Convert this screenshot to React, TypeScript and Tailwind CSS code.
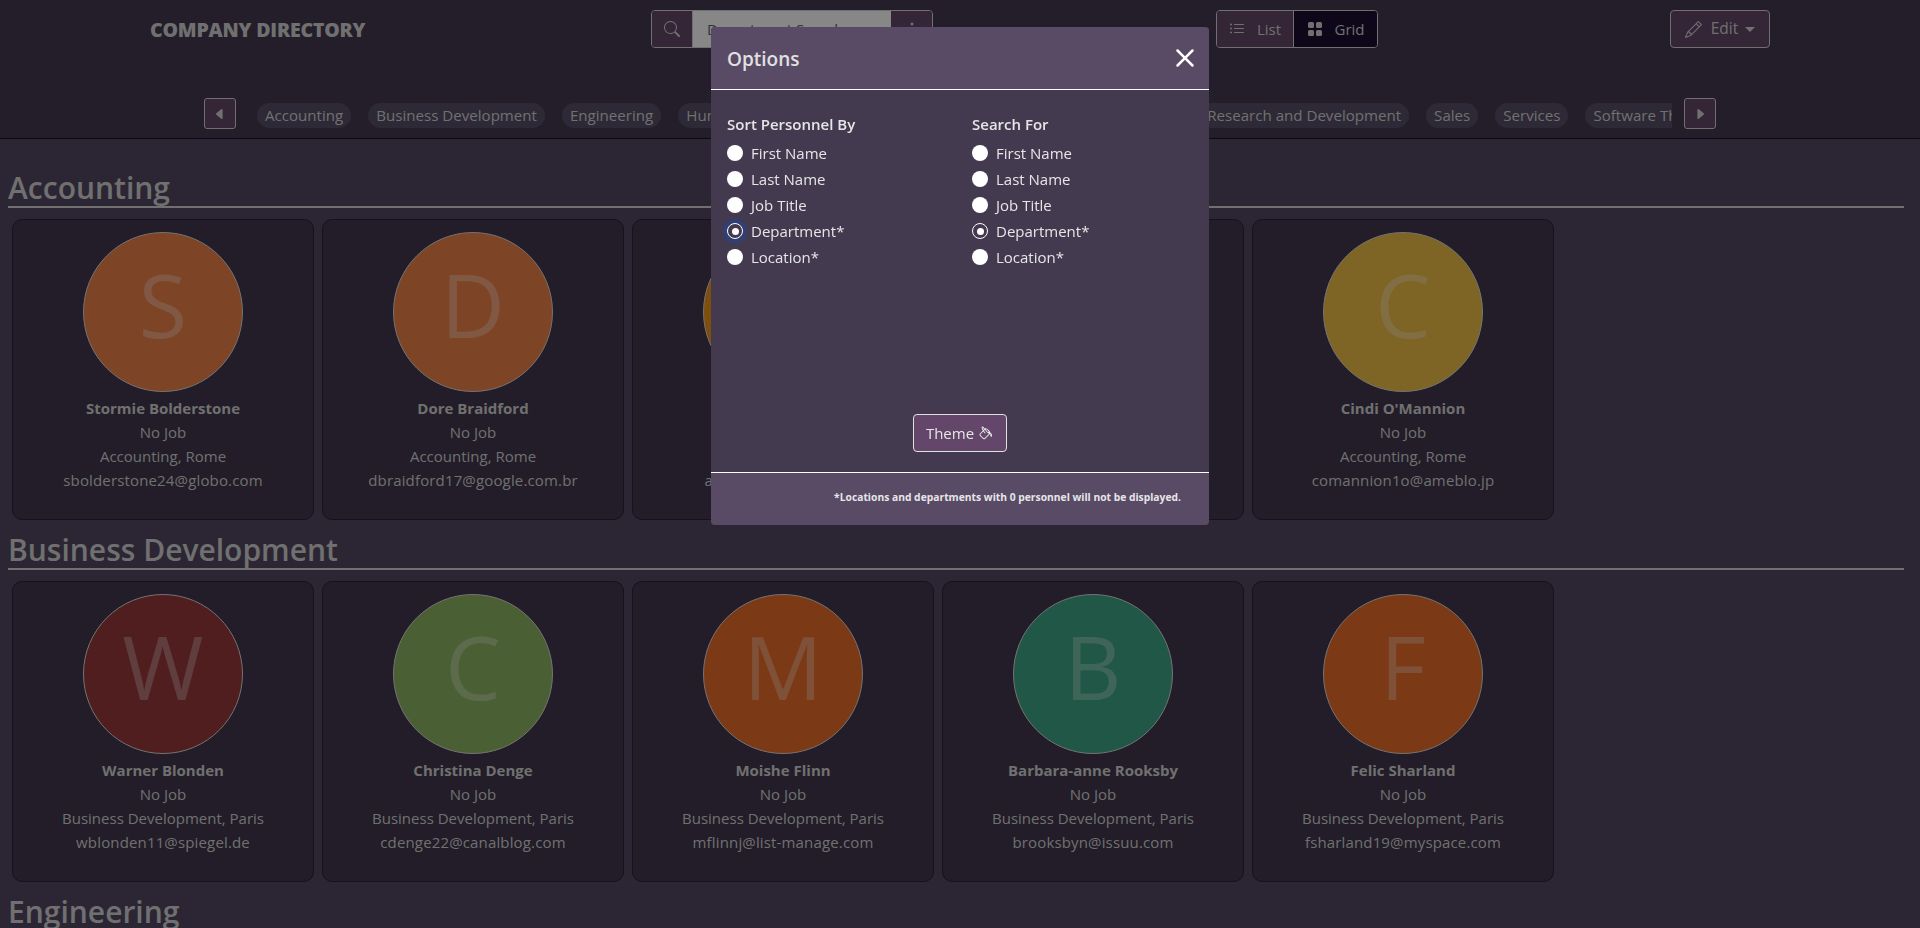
import React from 'react';
import { BsSearch, BsThreeDotsVertical, BsPencil, BsPaintBucket, BsX, BsListUl, BsGridFill, BsCaretLeftFill, BsCaretRightFill } from 'react-icons/bs';

type Person = { name: string; email: string; city: string; letter: string; color: string };

const departments = [
  'Accounting',
  'Business Development',
  'Engineering',
  'Human Resources',
  'Legal',
  'Marketing',
  'Product Management',
  'Research and Development',
  'Sales',
  'Services',
  'Software Then',
];

const sections: { title: string; people: Person[] }[] = [
  {
    title: 'Accounting',
    people: [
      { name: 'Stormie Bolderstone', email: 'sbolderstone24@globo.com', city: 'Rome', letter: 'S', color: 'bg-[#ec8048]' },
      { name: 'Dore Braidford', email: 'dbraidford17@google.com.br', city: 'Rome', letter: 'D', color: 'bg-[#ec8048]' },
      { name: 'Annis Lorkin', email: 'alorkin2a@senate.gov', city: 'Rome', letter: 'A', color: 'bg-[#ec951e]' },
      { name: 'Gerty Palfrey', email: 'gpalfrey1k@about.me', city: 'Rome', letter: 'G', color: 'bg-[#ec8048]' },
      { name: "Cindi O'Mannion", email: 'comannion1o@ameblo.jp', city: 'Rome', letter: 'C', color: 'bg-[#eebf48]' },
    ],
  },
  {
    title: 'Business Development',
    people: [
      { name: 'Warner Blonden', email: 'wblonden11@spiegel.de', city: 'Paris', letter: 'W', color: 'bg-[#97393a]' },
      { name: 'Christina Denge', email: 'cdenge22@canalblog.com', city: 'Paris', letter: 'C', color: 'bg-[#8eb364]' },
      { name: 'Moishe Flinn', email: 'mflinnj@list-manage.com', city: 'Paris', letter: 'M', color: 'bg-[#ea6d2b]' },
      { name: 'Barbara-anne Rooksby', email: 'brooksbyn@issuu.com', city: 'Paris', letter: 'B', color: 'bg-[#3ea484]' },
      { name: 'Felic Sharland', email: 'fsharland19@myspace.com', city: 'Paris', letter: 'F', color: 'bg-[#ea6d2b]' },
    ],
  },
];

const radioLabels = ['First Name', 'Last Name', 'Job Title', 'Department*', 'Location*'];

const Card: React.FC<{ person: Person; department: string }> = ({ person, department }) => (
  <div className="w-[302px] h-[301px] shrink-0 rounded-[10px] border border-[#2c2038] bg-[#40374d] flex flex-col items-center pt-[12px] text-[#d4d4d4] text-[15px] leading-[24px]">
    <div className={`w-[160px] h-[160px] pb-[16px] rounded-full border border-[#d9d9d9] flex items-center justify-center text-[88px] leading-none text-white/30 ${person.color}`}>
      {person.letter}
    </div>
    <div className="mt-[4px] font-bold">{person.name}</div>
    <div>No Job</div>
    <div>
      {department}, {person.city}
    </div>
    <div className="tracking-[0.01em]">{person.email}</div>
  </div>
);

const RadioGroup: React.FC<{ title: string; focused?: boolean }> = ({ title, focused }) => (
  <div className="w-[245px] shrink-0">
    <div className="font-semibold text-[15px] leading-[24px] text-[#e6e6e6] mb-[4px]">{title}</div>
    {radioLabels.map((label, i) => (
      <label key={label} className="flex items-center gap-[8px] h-[26px] text-[15px] text-[#e6e6e6]">
        {i === 3 ? (
          <span className={`w-[16px] h-[16px] rounded-full border border-white flex items-center justify-center ${focused ? 'ring-[4px] ring-[#2f3f78]' : ''}`}>
            <span className="w-[7px] h-[7px] rounded-full bg-white" />
          </span>
        ) : (
          <span className="w-[16px] h-[16px] rounded-full bg-white" />
        )}
        {label}
      </label>
    ))}
  </div>
);

export default function App() {
  return (
    <div className="h-screen overflow-hidden bg-[#534862]" style={{ fontFamily: '"Open Sans", "Noto Sans", sans-serif' }}>
      {/* Header */}
      <header className="h-[139px] bg-[#443a51] border-b border-[#1c1428]">
        <div className="flex items-start pt-[10px] h-[98px] text-[#d4d4d4] text-[15px]">
          <div className="ml-[150px] w-[501px] pt-[9px] text-[19.5px] font-extrabold leading-[22px] tracking-[-0.01em]">COMPANY DIRECTORY</div>

          <div className="flex w-[282px] h-[38px] rounded-[4px] border border-[#d4d4d4] overflow-hidden">
            <div className="w-[41px] bg-[#634669] flex items-center justify-center border-r border-[#d4d4d4]">
              <BsSearch size={16} />
            </div>
            <div className="flex-1 bg-white text-[#5c636a] pl-[14px] leading-[36px]">Department Search</div>
            <div className="w-[41px] bg-[#634669] flex items-center justify-center">
              <BsThreeDotsVertical size={16} />
            </div>
          </div>

          <div className="ml-[283px] flex w-[162px] h-[38px] rounded-[4px] border border-[#d4d4d4] overflow-hidden">
            <div className="w-[77px] bg-[#634669] flex items-center justify-center gap-[12px] border-r border-[#d4d4d4]">
              <BsListUl size={16} />
              List
            </div>
            <div className="flex-1 bg-[#1c0c30] flex items-center justify-center gap-[12px]">
              <BsGridFill size={16} />
              Grid
            </div>
          </div>

          <div className="ml-[292px] flex items-center justify-center gap-[9px] w-[100px] h-[38px] rounded-[4px] border border-[#d4d4d4] bg-[#634669] text-[15.5px]">
            <BsPencil size={17} />
            <span className="flex items-center gap-[7px]">
              Edit
              <span className="w-0 h-0 border-x-[5px] border-x-transparent border-t-[5px] border-t-[#d4d4d4]" />
            </span>
          </div>
        </div>

        {/* Department pills */}
        <div className="flex items-center h-[31px] pl-[204px] text-[#d4d4d4]">
          <div className="w-[32px] h-[31px] rounded-[3px] border border-[#d4d4d4] bg-[#634669] flex items-center justify-center">
            <BsCaretLeftFill size={14} />
          </div>
          <div className="w-[1415px] ml-[21px] mt-[3px] flex gap-[17px] overflow-hidden">
            {departments.map((d) => (
              <div key={d} className="shrink-0 h-[25px] px-[8px] rounded-full bg-[#584e66] text-[15.1px] leading-[25px]">
                {d}
              </div>
            ))}
          </div>
          <div className="ml-[12px] w-[32px] h-[31px] rounded-[3px] border border-[#d4d4d4] bg-[#634669] flex items-center justify-center">
            <BsCaretRightFill size={14} />
          </div>
        </div>
      </header>

      {/* Personnel */}
      <main className="pl-[8px] pr-[16px] pt-[31px]">
        {sections.map((s) => (
          <section key={s.title} className="mb-[12px]">
            <h2 className="h-[38px] text-[30px] leading-[36px] font-semibold text-[#d4d4d4] border-b-2 border-[#d4d4d4]">{s.title}</h2>
            <div className="flex gap-[8px] pl-[4px] pt-[11px]">
              {s.people.map((p) => (
                <Card key={p.email} person={p} department={s.title} />
              ))}
            </div>
          </section>
        ))}
        <h2 className="h-[38px] text-[30px] leading-[36px] font-semibold text-[#d4d4d4]">Engineering</h2>
      </main>

      {/* Backdrop */}
      <div className="fixed inset-0 bg-black/47" />

      {/* Options modal */}
      <div className="fixed inset-0 flex justify-center items-start pt-[27px]">
        <div className="w-[498px] h-[498px] rounded-[4px] overflow-hidden bg-[#443a50] flex flex-col">
          <div className="h-[63px] shrink-0 bg-[#594a66] border-b border-white flex items-center justify-between pl-[16px] pr-[4px]">
            <span className="text-[19px] font-semibold text-[#e0e0e0] pt-[2px]">Options</span>
            <BsX size={40} className="text-white" />
          </div>
          <div className="flex-1 flex flex-col px-[16px] pt-[22px]">
            <div className="flex">
              <RadioGroup title="Sort Personnel By" focused />
              <RadioGroup title="Search For" />
            </div>
            <button className="mt-[144px] self-center w-[94px] h-[38px] rounded-[4px] border border-[#e0e0e0] bg-[#634669] text-[#e6e6e6] text-[15px] flex items-center justify-center gap-[5px]">
              Theme
              <BsPaintBucket size={15} />
            </button>
          </div>
          <div className="h-[53px] shrink-0 bg-[#594a66] border-t border-white flex items-center justify-end pr-[28px] pb-[2px]">
            <span className="text-[10.3px] font-bold text-[#e6e6e6]">*Locations and departments with 0 personnel will not be displayed.</span>
          </div>
        </div>
      </div>
    </div>
  );
}
